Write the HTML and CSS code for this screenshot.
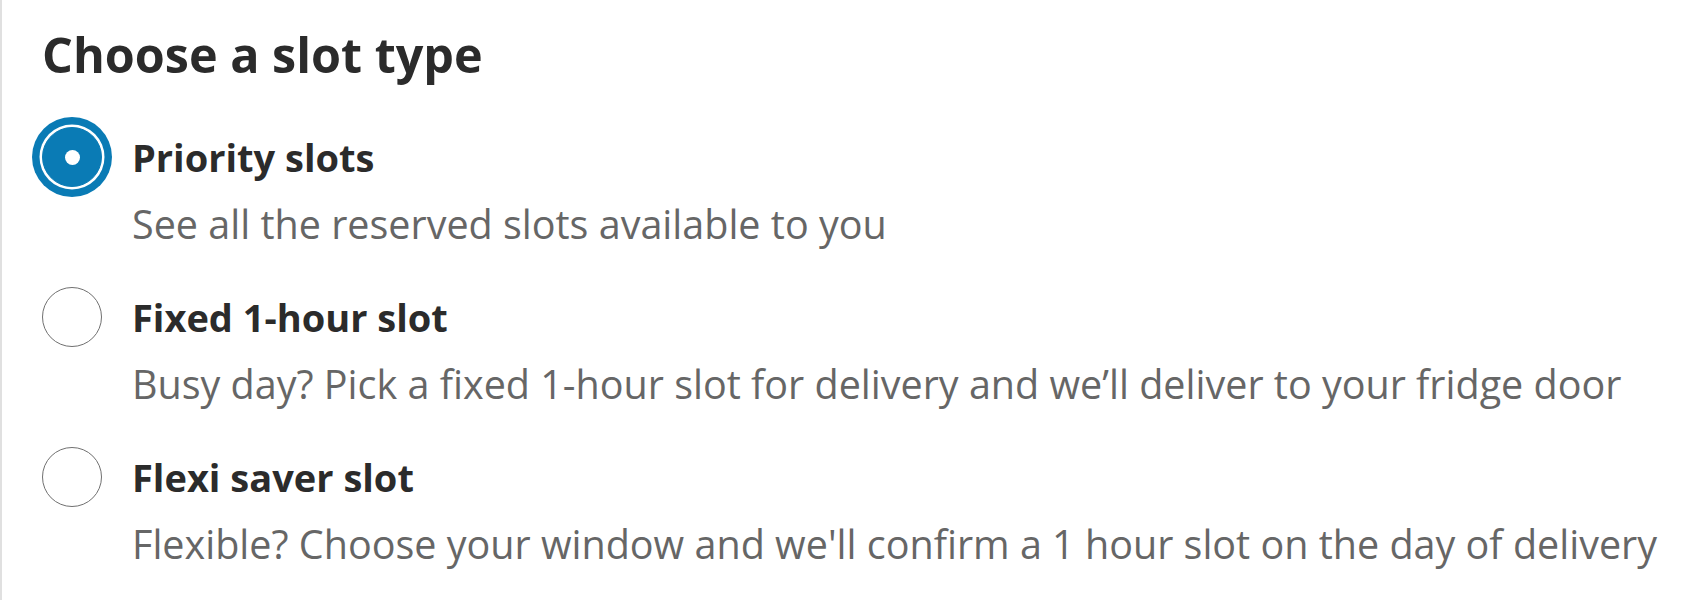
FILE: index.html
```html
<!DOCTYPE html>
<html lang="en">
<head>
<meta charset="utf-8">
<title>Choose a slot type</title>
<link rel="stylesheet" href="styles.css">
</head>
<body>
<main class="panel">
  <h2 class="title">Choose a slot type</h2>
  <div class="options" role="radiogroup">
    <label class="option">
      <span class="radio radio--checked"><span class="dot"></span></span>
      <span class="text">
        <span class="label">Priority slots</span>
        <span class="desc">See all the reserved slots available to you</span>
      </span>
    </label>
    <label class="option">
      <span class="radio"></span>
      <span class="text">
        <span class="label">Fixed 1-hour slot</span>
        <span class="desc">Busy day? Pick a fixed 1-hour slot for delivery and we’ll deliver to your fridge door</span>
      </span>
    </label>
    <label class="option">
      <span class="radio"></span>
      <span class="text">
        <span class="label">Flexi saver slot</span>
        <span class="desc">Flexible? Choose your window and we'll confirm a 1 hour slot on the day of delivery</span>
      </span>
    </label>
  </div>
</main>
</body>
</html>
```
FILE: styles.css
```css
html, body {
  margin: 0;
  padding: 0;
  background: #ffffff;
}
body {
  font-family: "Open Sans", "Liberation Sans", sans-serif;
  color: #333333;
}
.panel {
  border-left: 2px solid #e0e0e0;
  min-height: 600px;
  box-sizing: border-box;
  padding: 24px 0 0 40px;
}
.title {
  margin: 0;
  font-size: 48.5px;
  line-height: 60px;
  font-weight: 700;
  color: #2b2b2b;
}
.options {
  display: flex;
  flex-direction: column;
  gap: 38px;
  margin-top: 43px;
}
.option {
  display: flex;
  align-items: flex-start;
  gap: 30px;
}
.radio {
  flex: none;
  box-sizing: border-box;
  width: 60px;
  height: 60px;
  border-radius: 50%;
  border: 1.5px solid #707070;
  background: #fff;
  display: flex;
  align-items: center;
  justify-content: center;
}
.radio--checked {
  background: #0a7bb5;
  border-color: #0a7bb5;
  box-shadow: 0 0 0 2.5px #ffffff, 0 0 0 10px #0a7bb5;
}
.dot {
  width: 15px;
  height: 15px;
  border-radius: 50%;
  background: #ffffff;
}
.text {
  display: flex;
  flex-direction: column;
}
.label {
  font-size: 38px;
  line-height: 60px;
  font-weight: 700;
  color: #2b2b2b;
}
.desc {
  margin-top: 12px;
  font-size: 39.5px;
  line-height: 50px;
  color: #666666;
}
```
